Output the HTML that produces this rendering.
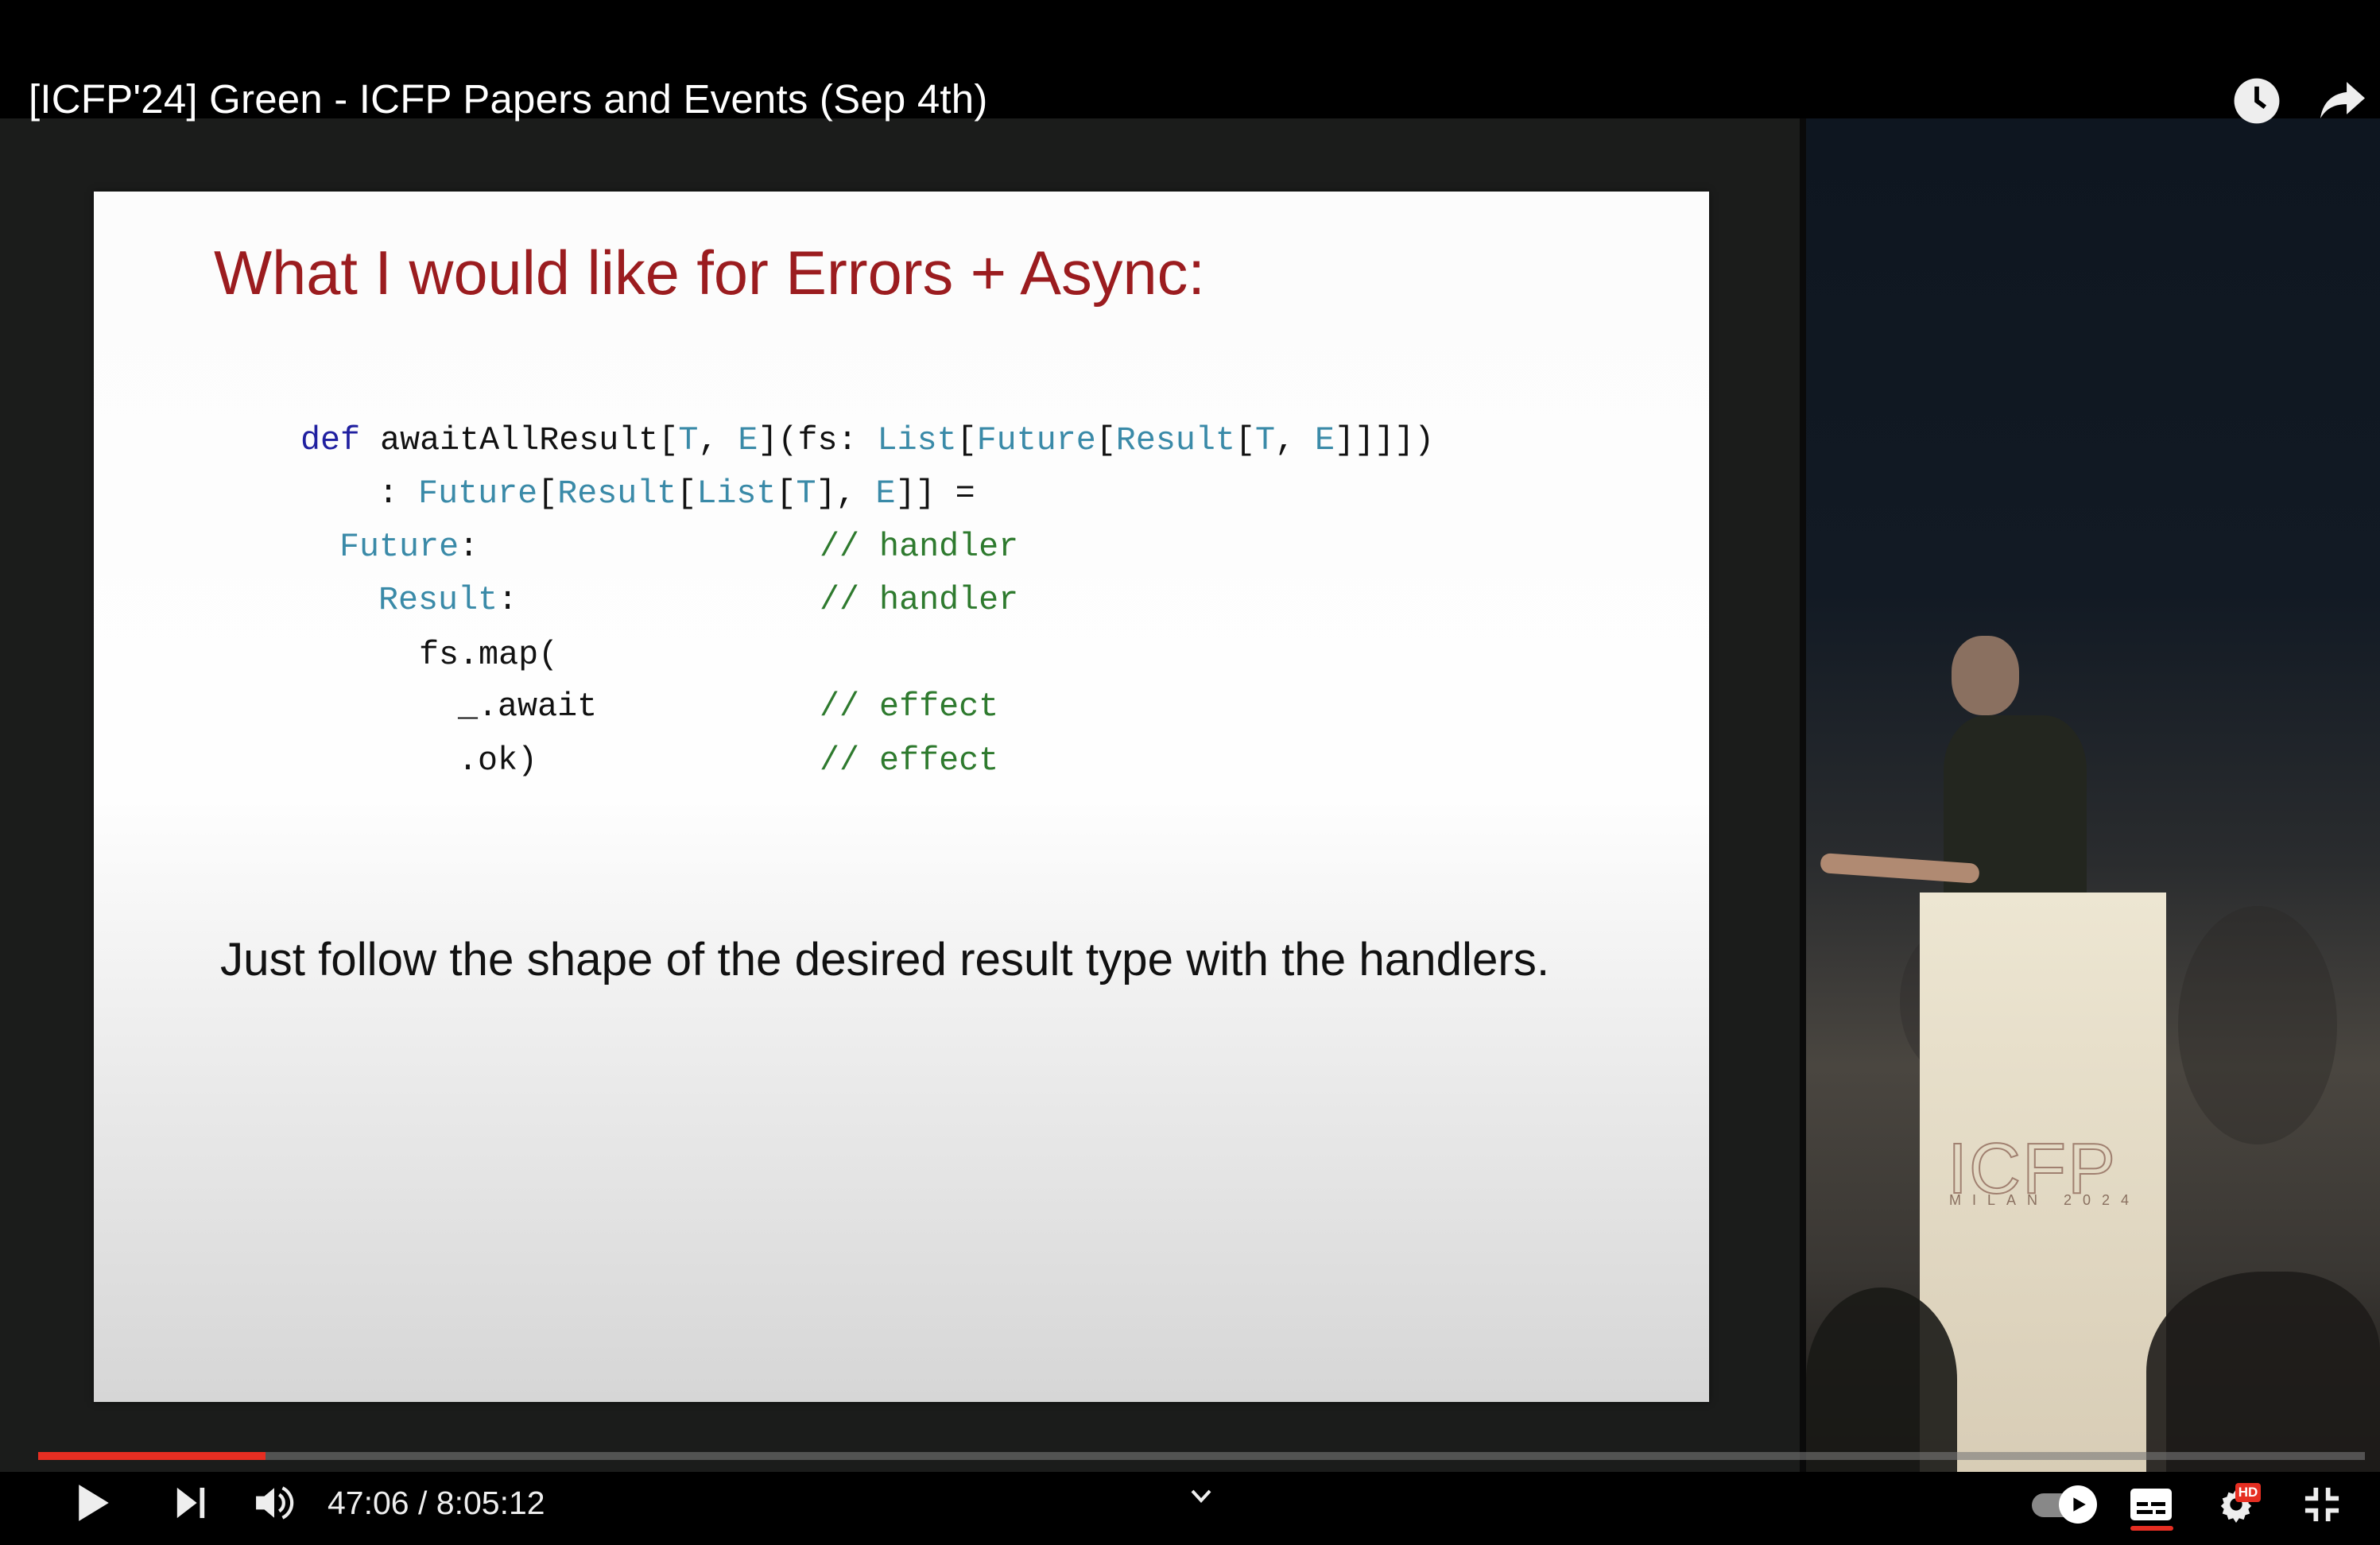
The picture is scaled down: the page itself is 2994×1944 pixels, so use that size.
<!DOCTYPE html>
<html><head><meta charset="utf-8"><style>
*{margin:0;padding:0;box-sizing:border-box}
body{width:2994px;height:1944px;background:#000;position:relative;overflow:hidden;font-family:"Liberation Sans",sans-serif}
.abs{position:absolute}
#video{left:0;top:149px;width:2994px;height:1703px;background:#1b1c1b}
#slide{left:118px;top:241px;width:2032px;height:1523px;background:linear-gradient(#fcfcfc 0%,#fefefe 50%,#e9e9e9 75%,#d6d6d6 100%);box-shadow:0 0 8px rgba(0,0,0,.5)}
#title{left:269px;top:300px;font-size:77.5px;color:#9b1c1f;white-space:nowrap}
.code{font-family:"Liberation Mono",monospace;font-size:41.7px;white-space:pre;color:#111}
.kw{color:#2020a0}.ty{color:#3a8aa8}.cm{color:#2e7a2e}
#body{left:277px;top:1174px;font-size:58.3px;color:#111;white-space:nowrap}
#stage{left:2268px;top:149px;width:726px;height:1703px;background:linear-gradient(180deg,#0e1620 0%,#121a24 35%,#2a2c2e 55%,#4a4640 70%,#3a3733 85%,#1a1816 100%)}
#podium{left:2415px;top:1123px;width:310px;height:729px;background:linear-gradient(#ede6d2,#d8cdb6)}
</style></head><body>
<div id="video" class="abs"></div>
<div class="abs" style="left:36px;top:95px;font-size:51px;color:#fff;white-space:nowrap;letter-spacing:0.2px">[ICFP'24] Green - ICFP Papers and Events (Sep 4th)</div>
<div id="stage" class="abs"></div>
<div class="abs" style="left:2264px;top:149px;width:8px;height:1703px;background:#0a0a0a"></div>
<div class="abs" style="left:2390px;top:1170px;width:120px;height:180px;background:#2a2828;border-radius:50%;opacity:.35"></div>
<div class="abs" style="left:2740px;top:1140px;width:200px;height:300px;background:#2a2826;border-radius:50%;opacity:.4"></div>
<div class="abs" style="left:2455px;top:800px;width:85px;height:100px;background:#8a7060;border-radius:45%"></div>
<div class="abs" style="left:2445px;top:900px;width:180px;height:230px;background:#23261f;border-radius:30% 30% 0 0"></div>
<div class="abs" style="left:2290px;top:1080px;width:200px;height:25px;background:#b08a72;border-radius:12px;transform:rotate(4deg)"></div>
<div id="podium" class="abs"></div>
<div class="abs" style="left:2450px;top:1420px;font-size:90px;color:transparent;-webkit-text-stroke:2px #a08070;letter-spacing:2px">ICFP</div>
<div class="abs" style="left:2452px;top:1500px;font-size:18px;color:#8a7060;letter-spacing:14px">MILAN 2024</div>
<div class="abs" style="left:2272px;top:1620px;width:190px;height:232px;background:#1a1916;border-radius:50% 50% 0 0;opacity:.9"></div>
<div class="abs" style="left:2700px;top:1600px;width:294px;height:252px;background:#1e1c19;border-radius:50% 40% 0 0;opacity:.9"></div>
<div id="slide" class="abs"></div>
<div id="title" class="abs">What I would like for Errors + Async:</div>
<div class="abs code" style="left:378px;top:530px"><span class="kw">def</span> awaitAllResult[<span class="ty">T</span>, <span class="ty">E</span>](fs: <span class="ty">List</span>[<span class="ty">Future</span>[<span class="ty">Result</span>[<span class="ty">T</span>, <span class="ty">E</span>]]]])</div>
<div class="abs code" style="left:476px;top:597px">: <span class="ty">Future</span>[<span class="ty">Result</span>[<span class="ty">List</span>[<span class="ty">T</span>], <span class="ty">E</span>]] =</div>
<div class="abs code ty" style="left:427px;top:664px">Future<span style="color:#111">:</span></div>
<div class="abs code ty" style="left:476px;top:731px">Result<span style="color:#111">:</span></div>
<div class="abs code" style="left:527px;top:800px">fs.map(</div>
<div class="abs code" style="left:576px;top:865px">_.await</div>
<div class="abs code" style="left:576px;top:933px">.ok)</div>
<div class="abs code cm" style="left:1031px;top:664px">// handler</div>
<div class="abs code cm" style="left:1031px;top:731px">// handler</div>
<div class="abs code cm" style="left:1031px;top:865px">// effect</div>
<div class="abs code cm" style="left:1031px;top:933px">// effect</div>
<div id="body" class="abs">Just follow the shape of the desired result type with the handlers.</div>
<div class="abs" style="left:48px;top:1827px;width:2927px;height:10px;background:rgba(120,120,120,.6)"></div>
<div class="abs" style="left:48px;top:1827px;width:286px;height:10px;background:#e62e22"></div>
<svg class="abs" style="left:96px;top:1866px" width="44" height="50" viewBox="0 0 20 24"><path d="M1 1l18 11L1 23z" fill="#eee"/></svg>
<svg class="abs" style="left:220px;top:1870px" width="40" height="42" viewBox="0 0 20 22"><path d="M1 1l13 10L1 21z" fill="#eee"/><rect x="16" y="1" width="3" height="20" fill="#eee"/></svg>
<svg class="abs" style="left:320px;top:1868px" width="50" height="46" viewBox="0 0 24 22"><path d="M1 7h5l6-5v18l-6-5H1z" fill="#eee"/><path d="M15 6a6 6 0 010 10M17 2a10 10 0 010 18" stroke="#eee" stroke-width="2" fill="none"/></svg>
<div class="abs" style="left:412px;top:1868px;font-size:41px;color:#eee">47:06 / 8:05:12</div>
<svg class="abs" style="left:1498px;top:1874px" width="26" height="18" viewBox="0 0 13 9"><path d="M1 1l5.5 6L12 1" stroke="#eee" stroke-width="2" fill="none"/></svg>
<div class="abs" style="left:2556px;top:1879px;width:70px;height:30px;background:#888;border-radius:15px"></div>
<div class="abs" style="left:2590px;top:1869px;width:48px;height:48px;background:#fff;border-radius:50%"></div>
<svg class="abs" style="left:2604px;top:1882px" width="22" height="22" viewBox="0 0 10 10"><path d="M2 1l7 4-7 4z" fill="#000"/></svg>
<div class="abs" style="left:2680px;top:1873px;width:52px;height:40px;background:#fff;border-radius:5px"></div>
<div class="abs" style="left:2688px;top:1890px;width:14px;height:5px;background:#000"></div><div class="abs" style="left:2706px;top:1890px;width:18px;height:5px;background:#000"></div>
<div class="abs" style="left:2688px;top:1900px;width:20px;height:5px;background:#000"></div><div class="abs" style="left:2712px;top:1900px;width:12px;height:5px;background:#000"></div>
<div class="abs" style="left:2680px;top:1920px;width:54px;height:6px;background:#e62e22;border-radius:3px"></div>
<svg class="abs" style="left:2790px;top:1870px" width="46" height="46" viewBox="0 0 24 24"><path d="M12 2l2 3 3-1 1 3 3 1-1 3 2 2-2 2 1 3-3 1-1 3-3-1-2 3-2-3-3 1-1-3-3-1 1-3-2-2 2-2-1-3 3-1 1-3 3 1z" fill="#eee"/><circle cx="12" cy="12" r="4" fill="#000"/></svg>
<div class="abs" style="left:2812px;top:1866px;width:32px;height:24px;background:#e62e22;border-radius:4px;color:#fff;font-size:17px;font-weight:bold;text-align:center;line-height:24px">HD</div>
<svg class="abs" style="left:2898px;top:1870px" width="46" height="46" viewBox="0 0 24 24"><path d="M8 1v7H1M16 1v7h7M8 23v-7H1M16 23v-7h7" stroke="#eee" stroke-width="3" fill="none"/></svg>
<svg class="abs" style="left:2808px;top:96px" width="62" height="62" viewBox="0 0 24 24"><circle cx="12" cy="12" r="11" fill="#eee"/><path d="M12 5v7l4 3" stroke="#000" stroke-width="2.2" fill="none"/></svg>
<svg class="abs" style="left:2916px;top:98px" width="62" height="56" viewBox="0 0 24 22"><path d="M14 2l9 8-9 8v-5C8 13 4 15 1 20 2 13 6 8 14 7z" fill="#eee"/></svg>
</body></html>
